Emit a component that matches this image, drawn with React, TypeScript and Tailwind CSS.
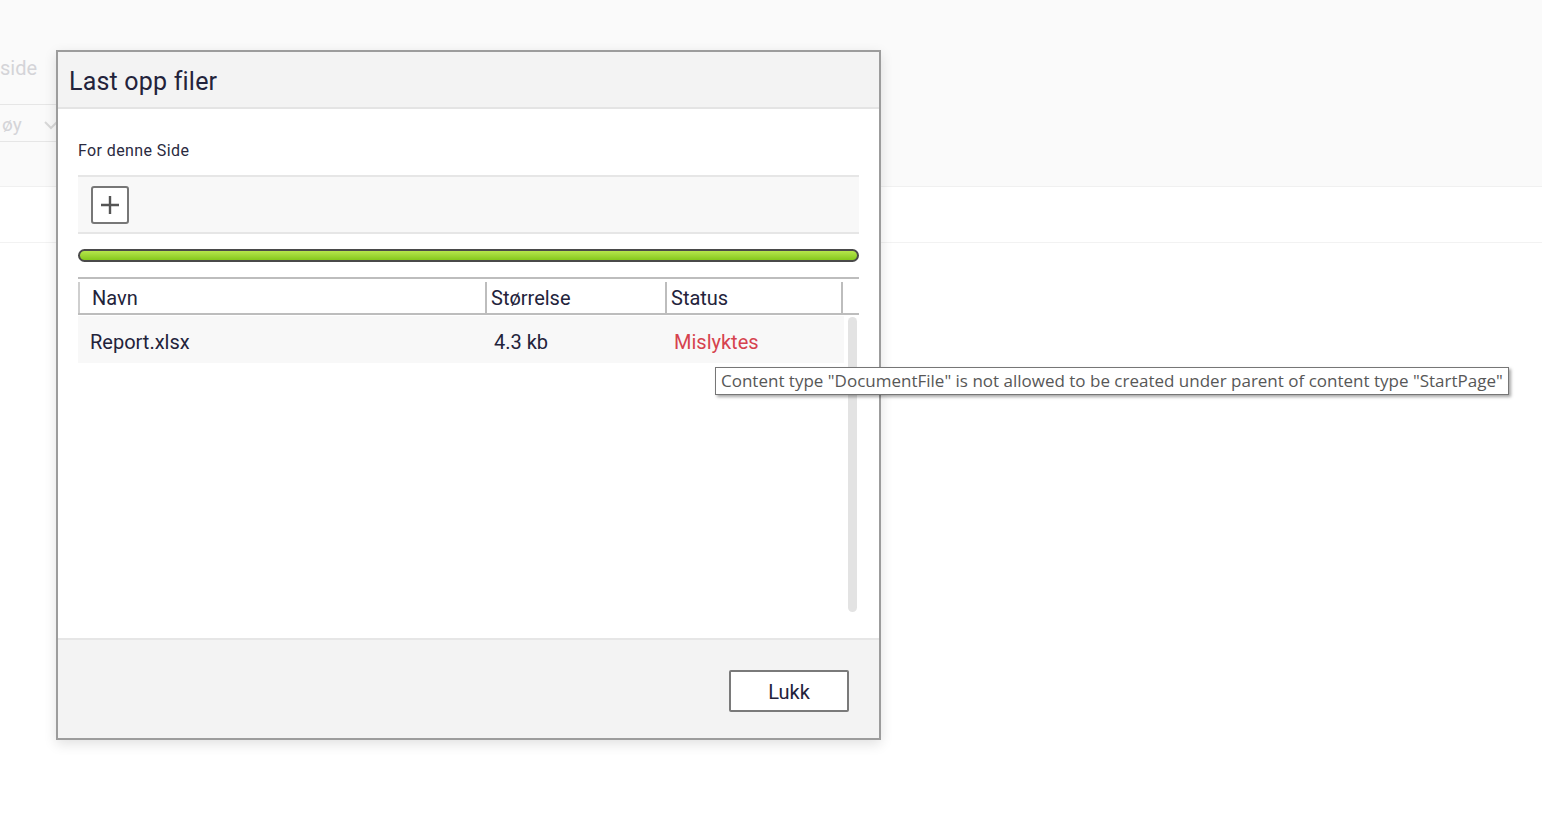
const font = { fontFamily: "Roboto, 'Liberation Sans', sans-serif" };

const App = () => {
	return (
		<div className="relative w-[1542px] h-[815px] overflow-hidden bg-white" style={font}>
			{/* background page */}
			<div className="h-[187px] bg-[#fafafa] border-b border-[#f0f0f0]">
				<div className="pt-[54px] text-[20px] text-[#d4d4d8] leading-[28px]">side</div>
				<div className="mt-[22px] w-[70px] h-[38px] border-y border-[#e6e6e6] flex items-center pl-[2px] pt-[4px] gap-[22px] text-[19px] text-[#d4d4d8]">
					<span>øy</span>
					<svg width="14" height="9" viewBox="0 0 14 9">
						<path d="M1 1l6 6 6-6" stroke="#d8d8d8" strokeWidth="2" fill="none" />
					</svg>
				</div>
			</div>
			<div className="h-[56px] border-b border-[#f2f2f2]" />

			{/* dialog */}
			<div className="absolute left-[56px] top-[50px] w-[825px] h-[690px] border-2 border-[#9c9c9c] bg-white shadow-[0_4px_12px_rgba(0,0,0,0.12)] flex flex-col">
				<div className="h-[57px] bg-[#f3f3f3] border-b-2 border-[#e4e4e4] flex items-center px-[11px] pt-[5px]">
					<h1 className="text-[25px] text-[#23233b] tracking-[0.2px]">Last opp filer</h1>
				</div>
				<div className="flex-1 px-[20px] pt-[33px] text-[#23233b]">
					<div className="text-[16px] leading-[18px] tracking-[0.4px] text-[#2a2a40]">For denne Side</div>
					<div className="mt-[15px] h-[59px] bg-[#f8f8f8] border-y-2 border-[#e6e6e6] flex items-center px-[13px]">
						<button className="w-[38px] h-[38px] border-2 border-[#777] rounded-[3px] bg-white flex items-center justify-center">
							<svg width="20" height="20" viewBox="0 0 20 20">
								<path d="M10 1v18M1 10h18" stroke="#555" strokeWidth="2.4" />
							</svg>
						</button>
					</div>
					<div className="mt-[15px] h-[13px] rounded-full border-2 border-[#4a4a4a] bg-gradient-to-b from-[#b6e64a] to-[#85c81a]" />
					<div className="mt-[15px] flex h-[38px] border-y-2 border-[#bdbdbd] text-[20px] pt-[3px]">
						<div className="w-[407px] border-l-2 border-[#cfcfcf] pl-[12px] flex items-center">Navn</div>
						<div className="w-[180px] border-l-2 border-[#bdbdbd] pl-[4px] flex items-center">Størrelse</div>
						<div className="w-[178px] border-x-2 border-[#bdbdbd] pl-[4px] flex items-center">Status</div>
						<div className="flex-1" />
					</div>
					<div className="flex mt-[1px]">
						<div className="flex-1">
							<div className="flex h-[47px] bg-[#f8f8f8] items-center text-[20px] pt-[5px]">
								<div className="w-[416px] pl-[12px]">Report.xlsx</div>
								<div className="w-[180px]">4.3 kb</div>
								<div className="text-[#d6424e]">Mislyktes</div>
							</div>
						</div>
						<div className="w-[15px] pt-[1px] flex justify-center">
							<div className="w-[9px] h-[295px] rounded-full bg-[#e3e3e3] ml-[2px]" />
						</div>
					</div>
				</div>
				<div className="h-[100px] bg-[#f3f3f3] border-t-2 border-[#e6e6e6] flex items-center justify-end pr-[30px] pt-[3px]">
					<button className="w-[120px] h-[42px] border-2 border-[#7a7a7a] rounded-[2px] bg-white text-[20px] text-[#23233b] pt-[3px]">
						Lukk
					</button>
				</div>
			</div>

			{/* tooltip */}
			<div
				className="absolute left-[715px] top-[367px] h-[28px] px-[5px] border border-[#767676] bg-white shadow-[2px_2px_3px_rgba(0,0,0,0.35)] text-[17px] text-[#575757] flex items-center whitespace-nowrap"
				style={{ fontFamily: "'Open Sans', 'Noto Sans', sans-serif" }}
			>
				Content type "DocumentFile" is not allowed to be created under parent of content type "StartPage"
			</div>
		</div>
	);
};

export default App;
